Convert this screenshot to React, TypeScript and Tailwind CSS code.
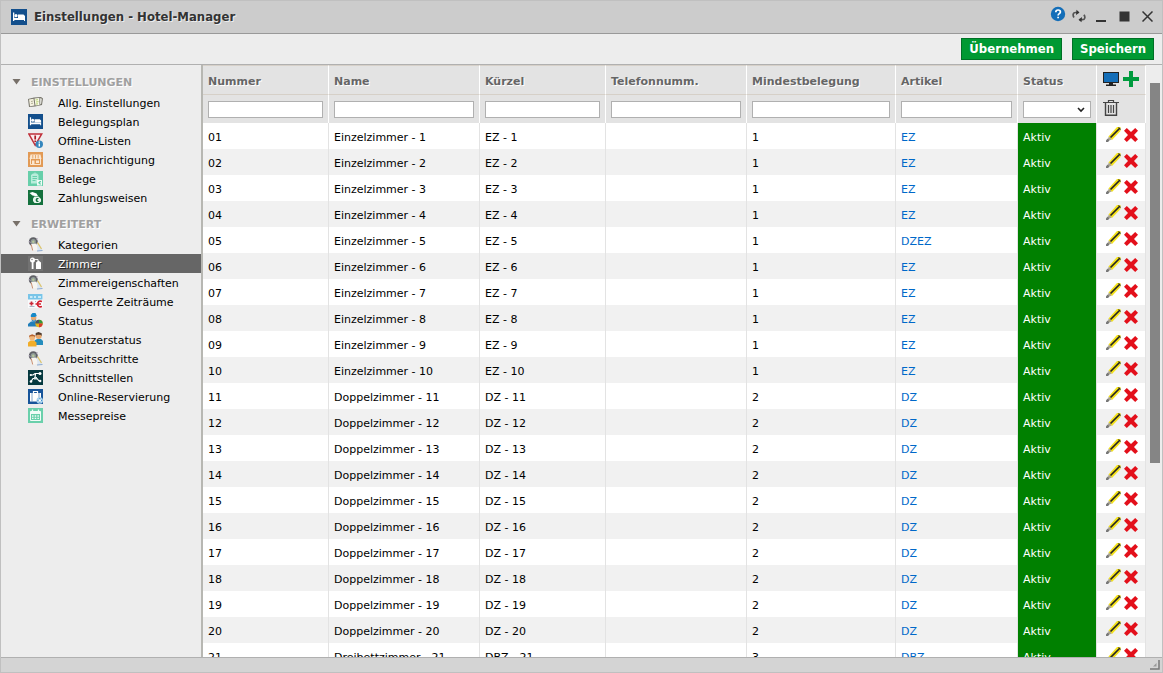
import { useState } from 'react';
import type { ReactNode } from 'react';
import clsx from 'clsx';

interface MenuEntry {
  label: string;
  icon: ReactNode;
}

interface Room {
  nummer: string;
  name: string;
  kuerzel: string;
  belegung: number;
  artikel: string;
}

const BedIcon = ({ className }: { className: string }) => (
  <svg viewBox="0 0 16 16" className={className} aria-hidden="true">
    <path d="M0 0h16v16H0z" fill="#134f8c" />
    <path d="M2 3.500h1.300V9H14v3h-1v-1H3.300v1H2z" fill="#fff" />
    <path d="M7 5.500h5.500L14 7v2H7z" fill="#fff" />
    <circle cx="5" cy="6.700" r="1.600" fill="#fff" />
  </svg>
);

const BookIcon = () => (
  <svg viewBox="0 0 15 15" className="size-[15px]" aria-hidden="true">
    <path d="M0 4l6-1.500L13 2l2 1.500-1 6.500-7 1.500-6 .5z" fill="#77756b" />
    <path d="M1 4.500l4.500-.8 1 6.800-4.500.7z" fill="#f4f1e0" />
    <path d="M6.500 3.500l4.500-.6.500 7-4 .7z" fill="#fafae8" />
    <path d="M3 6.500l1.800-.3M3.200 8.500l1.800-.3" stroke="#b0ae94" />
    <path d="M7.500 5l2.500-.3M8 7l2.500-.3M8 9l2-.2" stroke="#b3cf6c" />
    <path d="M11.500 3l2.500.8-.8 5-1.200.7z" fill="#d9d9d2" />
  </svg>
);

const WarningIcon = () => (
  <svg viewBox="0 0 15 15" className="size-[15px]" aria-hidden="true">
    <path d="M.8.9h12.900L7.200 12.300z" fill="#fbeeee" stroke="#c0303a" strokeWidth="1.500" />
    <path d="M7.200 2.500v4M7.200 7.500V9" stroke="#a81c25" strokeWidth="1.700" />
    <circle cx="11.300" cy="11.200" r="3.700" fill="#3486bd" />
    <path d="M11.300 8.500v1.300M11.300 10.500v3" stroke="#fff" strokeWidth="1.400" />
  </svg>
);

const ShopIcon = () => (
  <svg viewBox="0 0 15 15" className="size-[15px]" aria-hidden="true">
    <path d="M0 0h15v15H0z" fill="#e29a55" />
    <path d="M2.500 2.500h10l1 4.500h-12z" fill="#fbe6cf" />
    <path d="M4.800 3v3.500M7.500 3v3.500M10.200 3v3.500" stroke="#e29a55" strokeWidth=".8" />
    <path d="M2.500 7v5.500h10V7" fill="none" stroke="#fbe6cf" />
    <path d="M4 8.500h2.500v4H4zM8 8.500h3v2.500H8z" fill="#fbe6cf" />
  </svg>
);

const ReceiptIcon = () => (
  <svg viewBox="0 0 15 15" className="size-[15px]" aria-hidden="true">
    <path d="M0 0h15v15H0z" fill="#67cfaa" />
    <path d="M3 4l2-1.500h1.500V1.500h1v1H9L10.500 4v8.500H3z" fill="#b9eddb" />
    <path d="M4.500 5.500H9M4.500 7.500H9M4.500 9.500h3" stroke="#67cfaa" />
    <path d="M9 9h5v5.500H9z" fill="#effbf6" />
    <path d="M13 10.500h-1.500V13H13M10 11.800h2.500" fill="none" stroke="#67cfaa" />
  </svg>
);

const PaymentIcon = () => (
  <svg viewBox="0 0 15 15" className="size-[15px]" aria-hidden="true">
    <path d="M0 0h15v15H0z" fill="#14713d" />
    <path d="M1.500 3l3-1 4 1.500L10 6H7L4.500 5.500z" fill="#fff" />
    <path d="M6.500 6.500h4L13 9v2.500L11 13H6.500l-1.500-2V8.500z" fill="#e9f5ee" />
    <path d="M10.500 8.500H8.500v3h2M7.500 10h2.500" fill="none" stroke="#14713d" />
  </svg>
);

const GearPageIcon = () => (
  <svg viewBox="0 0 15 15" className="size-[15px]" aria-hidden="true">
    <circle cx="5.300" cy="4.700" r="4.500" fill="#5f6065" />
    <circle cx="5.300" cy="4.700" r="2.600" fill="#8f9a98" />
    <circle cx="5.300" cy="4.700" r="1.200" fill="#b7c79b" />
    <path d="M1 4.500l1.500 1M8.500 2.500l1.200-1" stroke="#b3a6c2" />
    <path d="M3 7l5.500-.5 1.500 6-5.500 1.500z" fill="#f7f5f0" />
    <path d="M3.200 7.500l1.500 6" stroke="#c98f72" />
    <path d="M9 6.500l3 1.500 2.500 5.500-5 .5z" fill="#dbe5f1" />
    <path d="M9.500 5.500l4 6.500" stroke="#dfc56a" strokeWidth="1.300" />
    <path d="M9 14l5.500-.5" stroke="#8daad0" />
  </svg>
);

const KeyIcon = () => (
  <svg viewBox="0 0 15 15" className="size-[15px]" aria-hidden="true">
    <path d="M0 0h15v15H0z" fill="#727272" />
    <circle cx="4.500" cy="4" r="2.500" fill="#fff" />
    <circle cx="4" cy="3.500" r=".7" fill="#727272" />
    <path d="M3.700 6h1.800v7H3.700zM8 6.500L10.500 4.500 13 6.500V13H8z" fill="#fff" />
    <path d="M6.500 3.500h3.500v2" fill="none" stroke="#fff" strokeWidth=".9" />
  </svg>
);

const BlockedIcon = () => (
  <svg viewBox="0 0 15 15" className="size-[15px]" aria-hidden="true">
    <path d="M0 0h15v14H0z" fill="#f8fafb" />
    <path d="M0 0h14.500v5.500H0z" fill="#79c5e8" />
    <path d="M2 3h2.500M6 3h2M10 3h3" stroke="#e4f6fc" strokeWidth="1.700" />
    <path d="M1.500 9.500h4M3.500 7.500v4" stroke="#c92a38" strokeWidth="1.700" />
    <path d="M1.500 12.500h5M7 7.500h1" stroke="#aab6c4" />
    <path d="M14 7.500c-3-1-4.500.5-4.500 2.500s1.500 3.500 4.500 2.500M7.500 10H13" fill="none" stroke="#d4202f" strokeWidth="1.700" />
  </svg>
);

const StatusIcon = () => (
  <svg viewBox="0 0 15 15" className="size-[15px]" aria-hidden="true">
    <path d="M0 13.500V11l3-2.500h5l3 2.500v2.500z" fill="#217eb9" />
    <circle cx="5.700" cy="5" r="2.700" fill="#e7aa72" />
    <path d="M2.800 4V2l1.700-2h3l1.300 3-2 1z" fill="#1689c7" />
    <path d="M3.500 6.200L6 7.800l2-1.600v2L6 9.500 4 8.200z" fill="#3c91ca" />
    <circle cx="11" cy="10.500" r="3.700" fill="#e4b321" />
    <path d="M11 10.500V6.800a3.700 3.700 0 0 0-3.700 3.700z" fill="#44546a" />
    <path d="M11 10.500V6.800a3.700 3.700 0 0 1 3.700 3.700z" fill="#33983e" />
    <path d="M11 10.500h3.700a3.700 3.700 0 0 1-3.700 3.700z" fill="#d43c30" />
  </svg>
);

const UsersIcon = () => (
  <svg viewBox="0 0 15 15" className="size-[15px]" aria-hidden="true">
    <path d="M6.500 13V8.500l2.500-1.500h4l2 2V13z" fill="#258dbd" />
    <circle cx="10.700" cy="4" r="3" fill="#e7a66b" />
    <path d="M7.700 4V1L10.500 0l3.200 1.200V4L12.500 2.700H9z" fill="#4f3a2c" />
    <path d="M0 14.500v-4L2.500 8.500h3.500l2.500 2v4z" fill="#f1ad28" />
    <circle cx="4.200" cy="5.800" r="2.800" fill="#f1b779" />
    <path d="M1.200 5.500V3.500l3-1.300 3 1.300v2L6 4.300H2.500z" fill="#b6622e" />
  </svg>
);

const InterfaceIcon = () => (
  <svg viewBox="0 0 15 15" className="size-[15px]" aria-hidden="true">
    <path d="M0 0h15v15H0z" fill="#06393f" />
    <path d="M2.500 5H5l2-1.500h5M7.500 3.500L7 8M3 11.500l2-3h4l2 2.500h1.500" fill="none" stroke="#fff" strokeWidth="1.200" />
    <circle cx="2.800" cy="5" r="1.100" fill="#fff" />
    <circle cx="12" cy="3.500" r="1.500" fill="#fff" />
    <circle cx="3" cy="11.500" r="1.300" fill="#fff" />
    <circle cx="12.200" cy="11" r="1.200" fill="#fff" />
    <path d="M6 7h3v2.500H6z" fill="#d8e8e9" />
  </svg>
);

const LuggageIcon = () => (
  <svg viewBox="0 0 15 15" className="size-[15px]" aria-hidden="true">
    <path d="M0 0h15v15H0z" fill="#17549a" />
    <path d="M5.500 4V2.500h4V4" fill="none" stroke="#fff" strokeWidth="1.200" />
    <path d="M2 4h11v8.500H2z" fill="#fff" />
    <path d="M4 4v8.500M11 4v5" stroke="#5f8dbf" strokeWidth=".8" />
    <circle cx="11.800" cy="11.500" r="3.300" fill="#a9d2ee" />
    <path d="M9.500 11.500h4.600M11.800 9.200v4.600" stroke="#3e8dc8" />
    <circle cx="11.800" cy="11.500" r="1.200" fill="#fff" />
  </svg>
);

const CalendarIcon = () => (
  <svg viewBox="0 0 15 15" className="size-[15px]" aria-hidden="true">
    <path d="M0 0h15v15H0z" fill="#6ad0ab" />
    <path d="M2.500 3.500h10v9h-10z" fill="none" stroke="#f2fcf8" />
    <path d="M2.500 3.500h10v2.500h-10z" fill="#f2fcf8" />
    <path d="M4.500 1.500v3M10.500 1.500v3" stroke="#f2fcf8" strokeWidth="1.300" />
    <path d="M4 8h7M4 10.300h7" stroke="#f2fcf8" strokeWidth="1.300" strokeDasharray="1.500 1.200" />
  </svg>
);

const settings: MenuEntry[] = [
  { label: 'Allg. Einstellungen', icon: <BookIcon /> },
  { label: 'Belegungsplan', icon: <BedIcon className="size-[15px]" /> },
  { label: 'Offline-Listen', icon: <WarningIcon /> },
  { label: 'Benachrichtigung', icon: <ShopIcon /> },
  { label: 'Belege', icon: <ReceiptIcon /> },
  { label: 'Zahlungsweisen', icon: <PaymentIcon /> },
];

const advanced: MenuEntry[] = [
  { label: 'Kategorien', icon: <GearPageIcon /> },
  { label: 'Zimmer', icon: <KeyIcon /> },
  { label: 'Zimmereigenschaften', icon: <GearPageIcon /> },
  { label: 'Gesperrte Zeiträume', icon: <BlockedIcon /> },
  { label: 'Status', icon: <StatusIcon /> },
  { label: 'Benutzerstatus', icon: <UsersIcon /> },
  { label: 'Arbeitsschritte', icon: <GearPageIcon /> },
  { label: 'Schnittstellen', icon: <InterfaceIcon /> },
  { label: 'Online-Reservierung', icon: <LuggageIcon /> },
  { label: 'Messepreise', icon: <CalendarIcon /> },
];

const filters = ['Nummer', 'Name', 'Kürzel', 'Telefonnumm.', 'Mindestbelegung', 'Artikel'];

const rooms: Room[] = [...Array(21)].map((_, i) => {
  const n = i + 1;
  const nummer = String(n).padStart(2, '0');
  if (n <= 10) {
    return { nummer, name: `Einzelzimmer - ${n}`, kuerzel: `EZ - ${n}`, belegung: 1, artikel: n === 5 ? 'DZEZ' : 'EZ' };
  }
  if (n <= 20) {
    return { nummer, name: `Doppelzimmer - ${n}`, kuerzel: `DZ - ${n}`, belegung: 2, artikel: 'DZ' };
  }
  return { nummer, name: `Dreibettzimmer - ${n}`, kuerzel: `DBZ - ${n}`, belegung: 3, artikel: 'DBZ' };
});

interface MenuSectionProps {
  title: string;
  entries: MenuEntry[];
  active: string;
  onSelect: (label: string) => void;
}

const MenuSection = ({ title, entries, active, onSelect }: MenuSectionProps) => (
  <section className="pt-1.5">
    <h2 className="flex h-[22px] items-center gap-2.5 pl-[11px] font-bold text-[#a0a0a0] [text-shadow:1px_1px_0_#fff]">
      <svg viewBox="0 0 9 6" className="h-1.5 w-[9px]" aria-hidden="true">
        <path d="M.5 0h8L4.500 5.500z" fill="#777069" />
      </svg>
      <span className="pt-0.5">{title}</span>
    </h2>
    <ul>
      {entries.map((entry) => (
        <li key={entry.label}>
          <a
            href="#"
            onClick={() => onSelect(entry.label)}
            className={clsx(
              'flex h-[19px] items-center gap-[15px] pl-[27px]',
              entry.label === active ? 'bg-[#666] text-white [text-shadow:1px_1px_0_#222]' : 'text-black',
            )}
          >
            {entry.icon}
            <span className="pt-0.5">{entry.label}</span>
          </a>
        </li>
      ))}
    </ul>
  </section>
);

const WindowControls = () => (
  <div className="flex items-center gap-1.5 pb-0.5">
    <button type="button" aria-label="Hilfe" className="mb-1">
      <svg viewBox="0 0 16 16" className="size-4">
        <circle cx="8" cy="8" r="7.200" fill="#146eb8" />
        <path d="M5.800 6.200c0-3 4.600-2.800 4.600-.2 0 1.700-2.300 1.500-2.300 3.500M8.100 10.700v1.600" fill="none" stroke="#fff" strokeWidth="1.700" />
      </svg>
    </button>
    <button type="button" aria-label="Aktualisieren">
      <svg viewBox="0 0 14 14" className="size-3.5" fill="none" stroke="#555" strokeWidth="1.700">
        <path d="M6.500 3.500H3.500C1 3.500.5 6 2 8.500" />
        <path d="M7.500 10.700h3c2.500 0 3-2.500 1.500-5" />
        <path d="M4.500.8L7.500 3.500 4 6zM10 8L6.500 10.700l3 2.500z" fill="#333" stroke="none" />
      </svg>
    </button>
    <div className="flex gap-3 pl-1">
      <button type="button" aria-label="Minimieren">
        <svg viewBox="0 0 11 11" className="size-[11px]"><path d="M0 9h10v2H0z" fill="#333" /></svg>
      </button>
      <button type="button" aria-label="Maximieren">
        <svg viewBox="0 0 11 11" className="size-[11px]"><path d="M.5.5h10v10h-10z" fill="#333" /></svg>
      </button>
      <button type="button" aria-label="Schließen">
        <svg viewBox="0 0 11 11" className="size-[11px]"><path d="M.5.5l10 10M10.500.5l-10 10" stroke="#333" strokeWidth="1.500" /></svg>
      </button>
    </div>
  </div>
);

const PencilIcon = () => (
  <svg viewBox="0 0 15 15" className="size-[15px]" aria-hidden="true">
    <path d="M2.500 9.500L11 0h3.500v4L6 13z" fill="#f4e21b" />
    <path d="M4.500 10.500L14 1" stroke="#252525" strokeWidth="1.700" />
    <path d="M12.500.5l2 2" stroke="#252525" />
    <path d="M2.800 9.500L5.800 12.300 4 13.300H1.500z" fill="#a9a28c" />
    <path d="M1.500 11.500l2 2L2 15H0v-1.500z" fill="#777" />
  </svg>
);

const DeleteIcon = () => (
  <svg viewBox="0 0 14 14" className="size-3.5" aria-hidden="true">
    <path d="M2.800 0L7 4l4.200-4L14 2.800 10 7l4 4.200-2.800 2.800L7 10l-4.200 4L0 11.200 4 7 0 2.800z" fill="#e3101b" />
  </svg>
);

export default function App() {
  const [active, setActive] = useState('Zimmer');

  return (
    <div className="flex h-screen flex-col border border-[#c0c0c0] bg-[#ededed] font-['DejaVu_Sans',Verdana,sans-serif] text-[11px] leading-4 text-black">
      <header className="flex h-[33px] shrink-0 items-center justify-between border-b border-[#999] bg-[#ccc] pr-[9px] pl-2.5">
        <h1 className="flex items-center gap-[7px] font-['DejaVu_Sans_Condensed','DejaVu_Sans',sans-serif] text-[13px] font-bold text-[#333] [text-shadow:1px_1px_0_#eee]">
          <BedIcon className="size-4" />
          Einstellungen - Hotel-Manager
        </h1>
        <WindowControls />
      </header>

      <div className="flex h-[31px] shrink-0 items-center justify-end gap-2.5 border-b border-[#b0b0b0] pr-2 font-['DejaVu_Sans_Condensed','DejaVu_Sans',sans-serif] text-[13px] font-bold text-white">
        <button type="button" className="h-[22px] border border-[#007026] bg-[#093] px-[7px]">Übernehmen</button>
        <button type="button" className="h-[22px] border border-[#007026] bg-[#093] px-[7px]">Speichern</button>
      </div>

      <div className="flex min-h-0 flex-1">
        <nav className="w-[202px] shrink-0 border-r-2 border-[#b7b7b2]">
          <MenuSection title="EINSTELLUNGEN" entries={settings} active={active} onSelect={setActive} />
          <MenuSection title="ERWEITERT" entries={advanced} active={active} onSelect={setActive} />
        </nav>

        <main className="min-w-0 flex-1 overflow-hidden">
          <table className="w-full table-fixed border-separate border-spacing-0 text-left">
            <colgroup>
              <col className="w-[126px]" />
              <col />
              <col className="w-[126px]" />
              <col className="w-[141px]" />
              <col className="w-[149px]" />
              <col className="w-[122px]" />
              <col className="w-[79px]" />
              <col className="w-[49px]" />
            </colgroup>
            <thead className="bg-[#e3e3e3]">
              <tr className="h-[30px] text-[#666]">
                {[...filters, 'Status'].map((title) => (
                  <th key={title} className="border-t border-r border-b border-t-[#d6d0c8] border-r-white border-b-[#d6d0c8] px-[5px] pt-1 [text-shadow:1px_1px_0_#fff]">
                    {title}
                  </th>
                ))}
                <th className="border-t border-r border-b border-t-[#d6d0c8] border-r-white border-b-[#d6d0c8] pb-0.5 pl-1.5">
                  <div className="flex items-center gap-1">
                    <button type="button" aria-label="Ansicht">
                      <svg viewBox="0 0 16 14" className="h-3.5 w-4">
                        <path d="M0 0h16v11H0zM6 11h4v1.500h3V14H3v-1.500h3z" fill="#222" />
                        <path d="M1 1h14v9H1z" fill="#146eb8" />
                      </svg>
                    </button>
                    <button type="button" aria-label="Hinzufügen">
                      <svg viewBox="0 0 16 16" className="size-4">
                        <path d="M6 0h4v6h6v4h-6v6H6v-6H0V6h6z" fill="#009b3e" />
                      </svg>
                    </button>
                  </div>
                </th>
              </tr>
              <tr className="h-7">
                {filters.map((title) => (
                  <th key={title} className="border-r border-white px-[5px]">
                    <input aria-label={title} className="block h-[17px] w-full border border-[#b0b0b0] bg-white px-1 font-normal" />
                  </th>
                ))}
                <th className="border-r border-white px-[5px]">
                  <div className="relative">
                    <select aria-label="Status" className="block h-[17px] w-full appearance-none border border-[#b0b0b0] bg-white px-1 font-normal">
                      <option></option>
                      <option>Aktiv</option>
                    </select>
                    <svg viewBox="0 0 8 6" className="pointer-events-none absolute top-1.5 right-1.5 h-1.5 w-2" aria-hidden="true">
                      <path d="M1 1l3 3 3-3" fill="none" stroke="#222" strokeWidth="1.600" />
                    </svg>
                  </div>
                </th>
                <th className="border-r border-white pb-0.5 pl-1.5">
                  <button type="button" aria-label="Filter löschen" className="block">
                    <svg viewBox="0 0 16 16" className="size-4" fill="none" stroke="#444">
                      <path d="M0 2.500h16M5.500 2V.5h5V2" strokeWidth="1.200" />
                      <path d="M2.500 3v12.300h11V3" strokeWidth="1.400" />
                      <path d="M5.500 5v8M8 5v8M10.500 5v8" strokeWidth="1.200" />
                    </svg>
                  </button>
                </th>
              </tr>
            </thead>
            <tbody>
              {rooms.map((room) => (
                <tr key={room.nummer} className="h-[26px] bg-white even:bg-[#f1f1f1]">
                  <td className="border-r border-[#e3e3e3] px-[5px] pt-1">{room.nummer}</td>
                  <td className="border-r border-[#e3e3e3] px-[5px] pt-1">{room.name}</td>
                  <td className="border-r border-[#e3e3e3] px-[5px] pt-1">{room.kuerzel}</td>
                  <td className="border-r border-[#e3e3e3] px-[5px] pt-1"></td>
                  <td className="border-r border-[#e3e3e3] px-[5px] pt-1">{room.belegung}</td>
                  <td className="border-r border-[#e3e3e3] px-[5px] pt-1">
                    <a href="#" className="text-[#0068c9]">{room.artikel}</a>
                  </td>
                  <td className="border-r border-[#e3e3e3] bg-[green] px-[5px] pt-1 text-white">Aktiv</td>
                  <td className="border-r border-[#e3e3e3] pb-0.5 pl-[9px]">
                    <div className="flex items-center gap-[3px]">
                      <button type="button" aria-label="Bearbeiten" className="pb-0.5"><PencilIcon /></button>
                      <button type="button" aria-label="Löschen"><DeleteIcon /></button>
                    </div>
                  </td>
                </tr>
              ))}
            </tbody>
          </table>
        </main>

        <div className="w-4 shrink-0 px-1 pt-[18px] pr-0.5">
          <div className="h-[380px] bg-[#858585]" />
        </div>
      </div>

      <footer className="flex h-[15px] shrink-0 items-end justify-end border-t border-[#b0b0b0] bg-[#d4d4d4] p-0.5">
        <svg viewBox="0 0 10 10" className="size-2.5" aria-hidden="true">
          <path d="M9 0v9H0" fill="none" stroke="#777" strokeWidth="1.500" />
          <path d="M6.500 3v3.500H3z" fill="#999" />
        </svg>
      </footer>
    </div>
  );
}
